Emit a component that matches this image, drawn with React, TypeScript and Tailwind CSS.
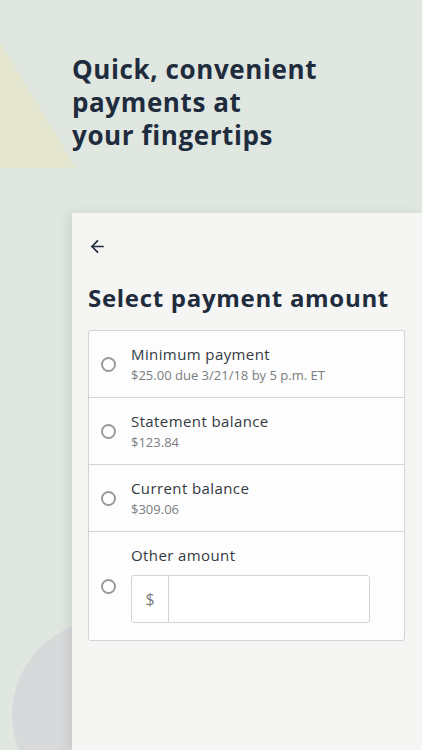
import { ArrowLeft } from 'lucide-react';

const options = [
  { title: 'Minimum payment', sub: '$25.00 due 3/21/18 by 5 p.m. ET' },
  { title: 'Statement balance', sub: '$123.84' },
  { title: 'Current balance', sub: '$309.06' },
];

function Radio() {
  return <span className="block w-[15px] h-[15px] rounded-full border-2 border-[#9a9a9a] bg-white shrink-0" />;
}

export default function App() {
  return (
    <div
      className="relative w-[422px] h-[750px] overflow-hidden bg-[#dfe7e0]"
      style={{ fontFamily: '"Open Sans", "Liberation Sans", sans-serif' }}
    >
      {/* background shapes */}
      <svg className="absolute left-0 top-0" width="120" height="200" viewBox="0 0 120 200">
        <polygon points="0,42 76,168 0,168" fill="#e4e6cf" />
      </svg>
      <div className="absolute left-[12px] top-[620px] w-[190px] h-[190px] rounded-full bg-[#d8d9da]" />

      <div className="relative flex flex-col">
        <h1 className="ml-[72px] mt-[53px] text-[26px] leading-[33px] font-bold text-[#1f2c3d] tracking-[0.6px]">
          Quick, convenient
          <br />
          payments at
          <br />
          your fingertips
        </h1>

        <div className="ml-[72px] mt-[61px] h-[540px] bg-[#f5f5f3] shadow-[-4px_0_10px_rgba(0,0,0,0.08)] pl-[16px] pr-[17px] pt-[24px]">
          <ArrowLeft size={19} strokeWidth={2.2} className="text-[#1f2c3d]" />
          <h2 className="mt-[27px] text-[24px] leading-[30px] font-bold text-[#1f2c3d] tracking-[0.7px]">Select payment amount</h2>

          <div className="mt-[17px] border border-[#d3d3d3] rounded-[3px] bg-[#fdfdfd]">
            {options.map((o) => (
              <div key={o.title} className="flex items-center h-[67px] border-b border-[#d3d3d3] pl-[12px]">
                <Radio />
                <div className="ml-[15px] -mt-[1px]">
                  <div className="text-[15px] leading-[20px] text-[#333a42] tracking-[0.4px]">{o.title}</div>
                  <div className="mt-[2px] text-[13px] leading-[18px] text-[#7a7d80]">{o.sub}</div>
                </div>
              </div>
            ))}
            <div className="flex items-center h-[108px] pl-[12px]">
              <Radio />
              <div className="ml-[15px] -mt-[4px]">
                <div className="text-[15px] leading-[20px] text-[#333a42] tracking-[0.4px]">Other amount</div>
                <div className="mt-[10px] flex w-[239px] h-[48px] border border-[#d3d3d3] rounded-[3px] bg-white">
                  <div className="w-[37px] flex items-center justify-center border-r border-[#d3d3d3] text-[16px] text-[#7a7d80]">$</div>
                  <div className="flex-1" />
                </div>
              </div>
            </div>
          </div>
        </div>
      </div>
    </div>
  );
}
